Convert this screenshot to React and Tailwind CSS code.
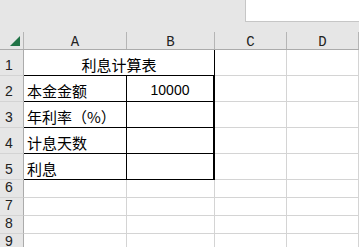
import React from "react";

const cjk = { fontFamily: '"Noto Sans CJK SC", "Liberation Sans", sans-serif' };
const mono = { fontFamily: '"Liberation Mono", "DejaVu Sans Mono", monospace' };
const sans = { fontFamily: '"Liberation Sans", "Noto Sans CJK SC", sans-serif' };

function RowHead({ n, h }) {
  return (
    <div
      className={`w-[24px] shrink-0 ${h} bg-[#e6e6e6] border-r border-b border-r-[#ababab] border-b-[#d4d4d4] flex items-end pl-[5px] pb-[3px] text-[14px] leading-none text-[#222]`}
      style={sans}
    >
      {n}
    </div>
  );
}

export default function App() {
  const cols = [
    { l: "A", w: "w-[103px]" },
    { l: "B", w: "w-[88px]" },
    { l: "C", w: "w-[72px]" },
    { l: "D", w: "w-[72px]" },
  ];
  const data = [
    { a: "本金金额", b: "10000" },
    { a: "年利率（%）", b: "" },
    { a: "计息天数", b: "" },
    { a: "利息", b: "" },
  ];
  return (
    <div className="w-[359px] h-[247px] overflow-hidden bg-white">
      <div className="h-[32px] bg-[#e6e6e6] flex justify-end">
        <div className="w-[114px] h-[22px] bg-white border-l border-b border-[#c6c6c6]"></div>
      </div>
      <div className="flex h-[18px] bg-[#e6e6e6] border-b border-[#ababab]">
        <div className="w-[24px] shrink-0 relative border-r border-[#b5b5b5]">
          <svg className="absolute left-[10px] top-[4px]" width="10" height="10" viewBox="0 0 10 10">
            <polygon points="10,0 10,10 0,10" fill="#217346" />
          </svg>
        </div>
        {cols.map((c) => (
          <div
            key={c.l}
            className={`${c.w} shrink-0 border-r border-[#b5b5b5] flex items-center justify-center text-[14px] leading-none text-[#222] pt-[2px]`}
            style={mono}
          >
            {c.l}
          </div>
        ))}
      </div>
      <div className="flex h-[26px]">
        <RowHead n="1" h="h-[26px]" />
        <div
          className="w-[191px] shrink-0 border-r border-b border-black flex items-end justify-center pb-[3px] text-[15px] leading-none text-black"
          style={cjk}
        >
          利息计算表
        </div>
        <div className="w-[72px] shrink-0 border-r border-b border-[#d4d4d4]"></div>
        <div className="w-[72px] shrink-0 border-r border-b border-[#d4d4d4]"></div>
      </div>
      {data.map((r, i) => (
        <div key={i} className="flex h-[26px]">
          <RowHead n={String(i + 2)} h="h-[26px]" />
          <div
            className="w-[103px] shrink-0 border-r border-b border-black flex items-end pl-[3px] pb-[3px] text-[15px] leading-none text-black whitespace-nowrap"
            style={cjk}
          >
            {r.a}
          </div>
          <div
            className="w-[88px] shrink-0 border-r-2 border-b border-black flex items-end justify-center pb-[4px] text-[14px] leading-none text-black"
            style={sans}
          >
            {r.b}
          </div>
          <div className="w-[72px] shrink-0 border-r border-b border-[#d4d4d4]"></div>
          <div className="w-[72px] shrink-0 border-r border-b border-[#d4d4d4]"></div>
        </div>
      ))}
      {[6, 7, 8, 9].map((n) => (
        <div key={n} className="flex h-[18px]">
          <RowHead n={String(n)} h="h-[18px]" />
          <div className="w-[103px] shrink-0 border-r border-b border-[#d4d4d4]"></div>
          <div className="w-[88px] shrink-0 border-r border-b border-[#d4d4d4]"></div>
          <div className="w-[72px] shrink-0 border-r border-b border-[#d4d4d4]"></div>
          <div className="w-[72px] shrink-0 border-r border-b border-[#d4d4d4]"></div>
        </div>
      ))}
    </div>
  );
}
